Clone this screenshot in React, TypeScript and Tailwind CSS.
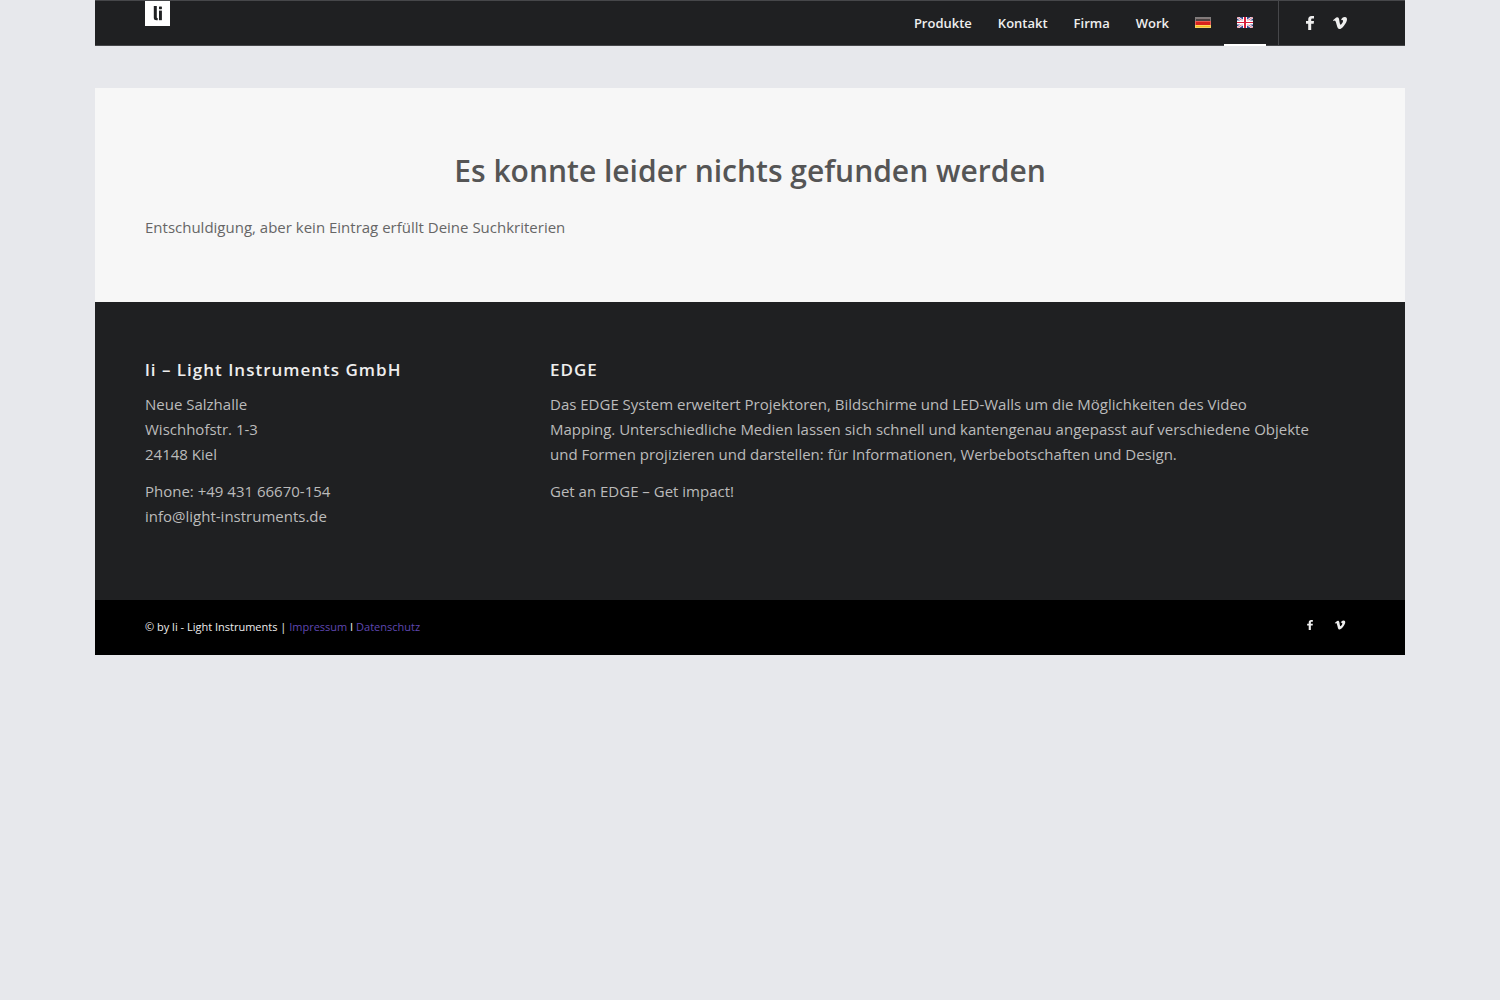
import React from 'react';
import { FaVimeoV } from 'react-icons/fa';

const navItems = [
  { label: 'Produkte', href: '#produkte' },
  { label: 'Kontakt', href: '#kontakt' },
  { label: 'Firma', href: '#firma' },
  { label: 'Work', href: '#work' },
];

const Logo: React.FC = () => (
  <svg viewBox="0 0 25 25" className="w-[25px] h-[25px]" aria-hidden="true">
    <rect width="25" height="25" fill="#fff" />
    <path d="M8.8 5h3v11.2c0 .6.2.8.9.8v2.2h-1.2c-1.8 0-2.7-.8-2.7-2.5z" fill="#1f2022" />
    <rect x="14" y="5.6" width="2.9" height="2.6" rx="0.4" fill="#1f2022" />
    <rect x="14" y="9.6" width="2.9" height="9.6" fill="#1f2022" />
  </svg>
);

const GermanFlag: React.FC = () => (
  <svg viewBox="0 0 16 11" className="w-4 h-[11px]" aria-hidden="true">
    <rect width="16" height="4" fill="#4a4444" />
    <rect y="4" width="16" height="4" fill="#d8221c" />
    <rect y="8" width="16" height="3" fill="#f5bd1f" />
    <rect x="1" y="1" width="14" height="1" fill="#857878" />
    <rect x="1" y="4" width="14" height="1" fill="#ec5a50" />
    <rect x="1" y="8" width="14" height="1" fill="#ffd95c" />
    <rect x="0.5" y="0.5" width="15" height="10" fill="none" stroke="#fff" strokeOpacity="0.3" />
  </svg>
);

const BritishFlag: React.FC = () => (
  <svg viewBox="0 0 16 11" className="w-4 h-[11px]" aria-hidden="true">
    <rect width="16" height="11" fill="#34478f" />
    <path d="M0 0L16 11M16 0L0 11" stroke="#f4f0f6" strokeWidth="2.6" />
    <path d="M0 0L16 11M16 0L0 11" stroke="#d8435a" strokeWidth="0.7" />
    <path d="M8 0V11M0 5.5H16" stroke="#fff" strokeWidth="4" />
    <path d="M8 0V11" stroke="#d8203c" strokeWidth="2" />
    <path d="M0 5.5H16" stroke="#d8203c" strokeWidth="1" />
  </svg>
);

const FacebookIcon: React.FC<{ className?: string }> = ({ className }) => (
  <svg viewBox="0 0 8 14" fill="currentColor" className={className} aria-hidden="true">
    <path d="M2.2 14V7.7H0V5.1h2.2V3.6C2.2 1.2 3.4 0 5.6 0H8v2.5H6.5c-1 0-1.3.4-1.3 1.2v1.4H8l-.3 2.6H5.2V14z" />
  </svg>
);

const App: React.FC = () => {
  return (
    <div className="min-h-screen bg-[#e7e8ec] font-['Open_Sans',sans-serif] text-[15px] leading-[25px]">
      <div className="max-w-[1310px] mx-auto">
        <header className="h-[46px] px-[50px] flex items-start justify-between bg-[#1f2022] border-y border-[#46474a]">
          <a href="#home" aria-label="Light Instruments">
            <Logo />
          </a>
          <div className="h-full flex items-stretch">
            <nav className="flex items-stretch text-[13px] font-semibold text-[#eeeeee]">
              {navItems.map((item) => (
                <a key={item.label} href={item.href} className="px-[13px] flex items-center">
                  {item.label}
                </a>
              ))}
              <a href="#de" aria-label="Deutsch" className="px-[13px] pb-0.5 flex items-center">
                <GermanFlag />
              </a>
              <a href="#en" aria-label="English" className="relative px-[13px] pb-0.5 flex items-center">
                <BritishFlag />
                <span className="absolute inset-x-0 -bottom-px h-[2px] bg-white" />
              </a>
            </nav>
            <div className="ml-3 pl-4 flex items-center border-l border-[#46474a] text-[#eeeeee]">
              <a href="#facebook" aria-label="Facebook" className="w-[30px] flex justify-center">
                <FacebookIcon className="w-2 h-3.5" />
              </a>
              <a href="#vimeo" aria-label="Vimeo" className="w-[30px] flex justify-center">
                <FaVimeoV className="w-4 h-4" />
              </a>
            </div>
          </div>
        </header>

        <main className="mt-[42px] px-[50px] pt-16 pb-[62px] bg-[#f7f7f7] text-[#666666]">
          <h1 className="mb-[25px] text-center text-[30px] leading-[38px] font-semibold text-[#555555]">
            Es konnte leider nichts gefunden werden
          </h1>
          <p>Entschuldigung, aber kein Eintrag erfüllt Deine Suchkriterien</p>
        </main>

        <footer>
          <div className="px-[50px] pt-[55px] pb-[71px] flex gap-[50px] bg-[#1f2022] text-[#bbbbbb]">
            <section className="w-[355px] shrink-0">
              <h2 className="mb-[9px] text-[17px] leading-[26px] font-semibold tracking-[1px] text-[#eeeeee]">
                li – Light Instruments GmbH
              </h2>
              <p className="mb-3">
                Neue Salzhalle
                <br />
                Wischhofstr. 1-3
                <br />
                24148 Kiel
              </p>
              <p>
                Phone: +49 431 66670-154
                <br />
                info@light-instruments.de
              </p>
            </section>
            <section className="max-w-[764px]">
              <h2 className="mb-[9px] text-[17px] leading-[26px] font-semibold tracking-[1px] text-[#eeeeee]">EDGE</h2>
              <p className="mb-3">
                Das EDGE System erweitert Projektoren, Bildschirme und LED-Walls um die Möglichkeiten des Video
                Mapping. Unterschiedliche Medien lassen sich schnell und kantengenau angepasst auf verschiedene
                Objekte und Formen projizieren und darstellen: für Informationen, Werbebotschaften und Design.
              </p>
              <p>Get an EDGE – Get impact!</p>
            </section>
          </div>

          <div className="px-[50px] pt-4 pb-[17px] flex items-start justify-between bg-black text-[#eeeeee]">
            <p className="text-[11px] leading-[22px]">
              © by li - Light Instruments | <a href="#impressum" className="text-[#5f47b0]">Impressum</a> I{' '}
              <a href="#datenschutz" className="text-[#5f47b0]">Datenschutz</a>
            </p>
            <div className="h-[18px] flex items-center">
              <a href="#facebook" aria-label="Facebook" className="w-[30px] flex justify-center">
                <FacebookIcon className="w-1.5 h-2.5" />
              </a>
              <a href="#vimeo" aria-label="Vimeo" className="w-[30px] flex justify-center">
                <FaVimeoV className="w-3 h-3" />
              </a>
            </div>
          </div>
        </footer>
      </div>
    </div>
  );
};

export default App;
